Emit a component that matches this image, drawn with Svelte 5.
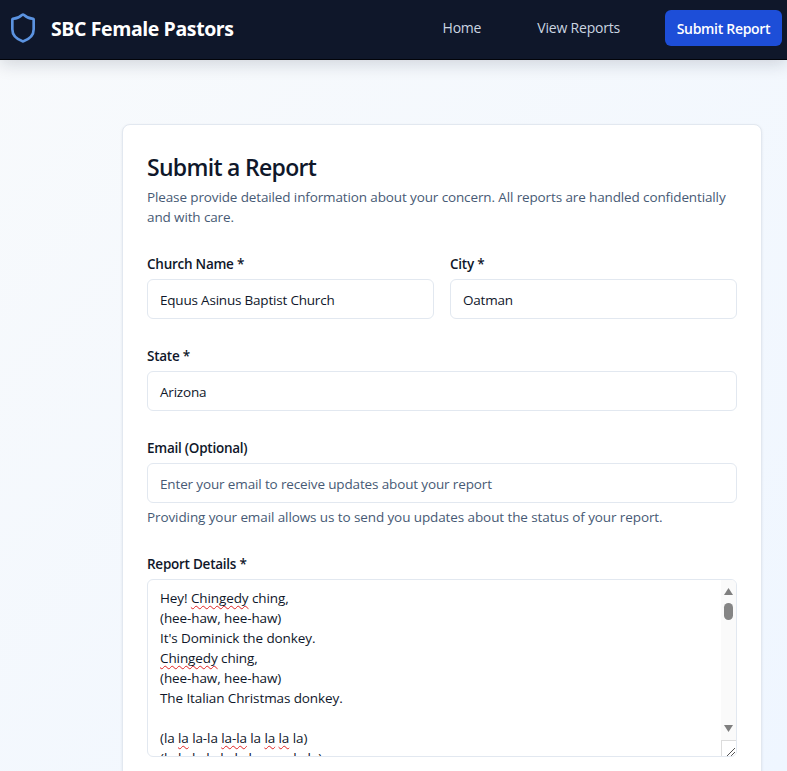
<script>
  const navLinks = ['Home', 'View Reports'];
  const lyrics = [
    [{ t: 'Hey! ' }, { t: 'Chingedy', bad: true }, { t: ' ching,' }],
    [{ t: '(hee-haw, hee-haw)' }],
    [{ t: "It's Dominick the donkey." }],
    [{ t: 'Chingedy', bad: true }, { t: ' ching,' }],
    [{ t: '(hee-haw, hee-haw)' }],
    [{ t: 'The Italian Christmas donkey.' }],
    [{ t: '\u00a0' }],
    [
      { t: '(la ' }, { t: 'la', bad: true }, { t: ' la-la ' }, { t: 'la-la', bad: true },
      { t: ' la ' }, { t: 'la', bad: true }, { t: ' ' }, { t: 'la', bad: true }, { t: ' la)' },
    ],
    // only the tops of this line show above the textarea's bottom edge
    [{ t: '(la la la la la la la \u00a0\u00a0\u00a0\u00a0\u00a0\u00a0\u00a0\u00a0\u00a0la la)' }],
  ];
</script>

<div class="page">
  <header class="topbar">
    <div class="brand">
      <svg class="shield" viewBox="0 0 24 24" fill="none" stroke="#5b93e0" stroke-width="2" stroke-linecap="round" stroke-linejoin="round">
        <path d="M20 13c0 5-3.5 7.5-7.66 8.95a1 1 0 0 1-.67-.01C7.5 20.5 4 18 4 13V6a1 1 0 0 1 1-1c2 0 4.5-1.2 6.24-2.72a1.17 1.17 0 0 1 1.52 0C14.51 3.81 17 5 19 5a1 1 0 0 1 1 1z" />
      </svg>
      <span class="brand-name">SBC Female Pastors</span>
    </div>
    <nav class="nav">
      {#each navLinks as link}
        <span class="nav-link">{link}</span>
      {/each}
      <span class="nav-cta">Submit Report</span>
    </nav>
  </header>

  <main class="content">
    <section class="card">
      <h1>Submit a Report</h1>
      <p class="intro">Please provide detailed information about your concern. All reports are handled confidentially and with care.</p>

      <div class="row">
        <div class="field">
          <span class="label">Church Name *</span>
          <div class="input">Equus Asinus Baptist Church</div>
        </div>
        <div class="field">
          <span class="label">City *</span>
          <div class="input">Oatman</div>
        </div>
      </div>

      <div class="field">
        <span class="label">State *</span>
        <div class="input">Arizona</div>
      </div>

      <div class="field">
        <span class="label">Email (Optional)</span>
        <div class="input placeholder">Enter your email to receive updates about your report</div>
        <p class="hint">Providing your email allows us to send you updates about the status of your report.</p>
      </div>

      <div class="field">
        <span class="label">Report Details *</span>
        <div class="textarea">
          <div class="text">
            {#each lyrics as line}
              <div class="line">{#each line as part}{#if part.bad}<span class="misspelt">{part.t}</span>{:else}{part.t}{/if}{/each}</div>
            {/each}
          </div>
          <div class="scrollbar">
            <svg class="arrow" viewBox="0 0 9 7"><path d="M4.5 0 9 7H0z" fill="#7f7f7f" /></svg>
            <div class="track"><div class="thumb"></div></div>
            <svg class="arrow" viewBox="0 0 9 7"><path d="M0 0h9L4.5 7z" fill="#7f7f7f" /></svg>
            <div class="corner">
              <svg viewBox="0 0 15 15" width="15" height="15"><path d="M5 13 13 5M9 13l4-4" stroke="#555" stroke-width="1" fill="none" /></svg>
            </div>
          </div>
        </div>
      </div>
    </section>
  </main>
</div>

<style>
  :global(body) {
    font-family: "Open Sans", "Noto Sans", sans-serif;
    color: #0f172a;
  }

  .page {
    height: 771px;
    overflow: hidden;
    background: linear-gradient(135deg, #f8fafc, #eff6ff);
  }

  .topbar {
    height: 60px;
    box-sizing: border-box;
    padding: 0 5px 3px 7px;
    background: #0f172a;
    border-bottom: 1px solid #02040a;
    box-shadow: 0 4px 16px rgba(15, 23, 42, 0.16);
    display: flex;
    align-items: center;
    justify-content: space-between;
  }

  .brand {
    display: flex;
    align-items: center;
    gap: 12px;
  }

  .shield {
    width: 32px;
    height: 32px;
    display: block;
  }

  .brand-name {
    font-size: 19.5px;
    font-weight: 700;
    color: #fff;
    letter-spacing: -0.4px;
  }

  .nav {
    display: flex;
    align-items: center;
    gap: 56px;
    font-size: 14px;
    font-weight: 500;
  }

  .nav-link {
    color: #cbd5e1;
    letter-spacing: -0.2px;
    margin-bottom: 2px;
  }

  .nav-cta {
    height: 36px;
    width: 117px;
    margin-left: -11px;
    border-radius: 6px;
    background: #1d4ed8;
    color: #fff;
    font-weight: 600;
    letter-spacing: -0.3px;
    display: flex;
    align-items: center;
    justify-content: center;
  }

  .content {
    padding: 64px 25px 0 122px;
  }

  .card {
    background: #fff;
    border: 1px solid #e2e8f0;
    border-radius: 8px;
    padding: 24px;
    box-shadow: 0 1px 3px rgba(15, 23, 42, 0.08);
    display: flex;
    flex-direction: column;
    gap: 24px;
  }

  h1 {
    margin: 0 0 -22px;
    font-size: 23px;
    line-height: 36px;
    font-weight: 600;
    letter-spacing: -0.7px;
  }

  .intro {
    margin: 0 0 3px;
    font-size: 13.5px;
    line-height: 20px;
    color: #475a75;
    letter-spacing: -0.125px;
  }

  .row {
    display: grid;
    grid-template-columns: 1fr 1fr;
    gap: 16px;
  }

  .field {
    display: flex;
    flex-direction: column;
    gap: 4px;
    margin-bottom: 3px;
  }

  .label {
    font-size: 13.5px;
    line-height: 20px;
    font-weight: 560;
    color: #0f172a;
    letter-spacing: -0.25px;
    margin-bottom: 1px;
  }

  .input {
    height: 40px;
    box-sizing: border-box;
    padding: 1px 12px 0;
    border: 1px solid #e2e8f0;
    border-radius: 6px;
    background: #fff;
    font-size: 13.5px;
    letter-spacing: -0.2px;
    color: #0f172a;
    display: flex;
    align-items: center;
  }

  .placeholder {
    color: #475a75;
    letter-spacing: -0.14px;
  }

  .hint {
    margin: 0;
    font-size: 13.5px;
    line-height: 20px;
    color: #475a75;
    letter-spacing: -0.1px;
  }

  .textarea {
    height: 178px;
    box-sizing: border-box;
    border: 1px solid #e2e8f0;
    border-radius: 6px;
    background: #fff;
    overflow: hidden;
    display: flex;
  }

  .text {
    flex: 1;
    padding: 8px 12px;
    font-size: 13.5px;
    line-height: 20px;
    letter-spacing: -0.1px;
  }

  .line {
    height: 20px;
    white-space: nowrap;
  }

  .misspelt {
    text-decoration: underline wavy #e02424 1.2px;
    text-decoration-skip-ink: none;
    text-underline-offset: 2px;
  }

  .scrollbar {
    width: 15px;
    background: #fafafa;
    display: flex;
    flex-direction: column;
    align-items: center;
    padding-top: 8px;
  }

  .arrow {
    width: 9px;
    height: 7px;
    flex: none;
  }

  .track {
    flex: 1;
    width: 100%;
    padding-top: 8px;
    display: flex;
    justify-content: center;
  }

  .thumb {
    width: 9px;
    height: 17px;
    border-radius: 5px;
    background: #858585;
  }

  .corner {
    width: 15px;
    height: 15px;
    flex: none;
    margin-top: 8px;
    background: #fff;
    border-top: 1px solid #dcdcdc;
    border-left: 1px solid #dcdcdc;
  }
</style>
